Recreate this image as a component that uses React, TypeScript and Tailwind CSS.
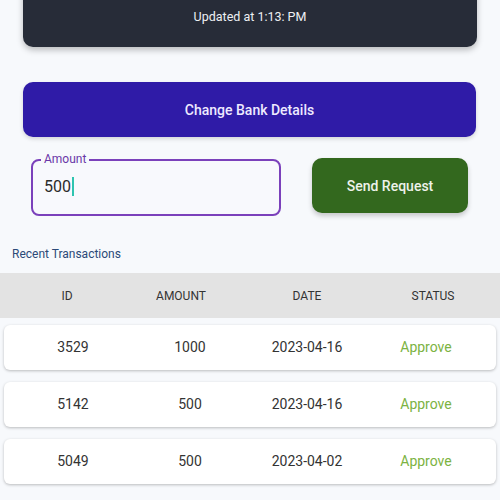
const transactions = [
  { id: '3529', amount: '1000', date: '2023-04-16', status: 'Approve' },
  { id: '5142', amount: '500', date: '2023-04-16', status: 'Approve' },
  { id: '5049', amount: '500', date: '2023-04-02', status: 'Approve' },
];

export default function App() {
  return (
    <div className="h-[500px] w-[500px] overflow-hidden bg-[#f7f9fc] font-['Roboto',sans-serif]">
      {/* balance card, scrolled partly out of view */}
      <div className="mx-[23px] -mt-[39px] flex flex-col items-center rounded-[10px] bg-[#272c38] pb-[22px] pt-[20px] shadow-[0_3px_6px_rgba(0,0,0,0.25)]">
        <p className="text-[14px] leading-[18px] text-white/90">Wallet Balance</p>
        <p className="mt-[10px] text-[12.5px] leading-[16px] text-[#eef0f4]">Updated at 1:13: PM</p>
      </div>

      <button
        type="button"
        className="mx-[23px] mt-[35px] flex h-[55px] w-[453px] items-center justify-center rounded-[10px] bg-[#2f1ba7] pt-[2px] text-[14px] font-medium text-[#eeeaff] shadow-[0_2px_4px_rgba(0,0,0,0.15)]"
      >
        Change Bank Details
      </button>

      <div className="mt-[21px] flex items-start">
        <div className="relative ml-[31px] mt-[1px] h-[57px] w-[250px] rounded-[8px] border-2 border-[#7b41bb] bg-[#f8f9fd]">
          <span className="absolute -top-[10px] left-[8px] bg-[#f7f9fc] px-[3px] text-[12px] leading-[16px] text-[#6a37a8]">
            Amount
          </span>
          <div className="flex h-full items-center pl-[11px] pb-[2px]">
            <span className="text-[16px] text-[#2b2b2b]">500</span>
            <span className="ml-[1px] h-[19px] w-[2px] bg-[#2ec4b0]" />
          </div>
        </div>
        <button
          type="button"
          className="ml-[31px] flex h-[55px] w-[156px] items-center justify-center rounded-[10px] bg-[#33681e] pt-[2px] text-[14px] font-medium text-[#eef2ea] shadow-[0_3px_5px_rgba(0,0,0,0.2)]"
        >
          Send Request
        </button>
      </div>

      <p className="ml-[12px] mt-[30px] text-[12px] leading-[16px] text-[#2c4a78]">Recent Transactions</p>

      <div className="mt-[11px] grid h-[45px] grid-cols-[134px_94px_158px_94px] items-center bg-[#e3e3e3] text-[12px] text-[#333]">
        <span className="text-center">ID</span>
        <span className="text-center">AMOUNT</span>
        <span className="text-center">DATE</span>
        <span className="text-center">STATUS</span>
      </div>

      <div className="mt-[7px] flex flex-col gap-[12px] px-[4px]">
        {transactions.map((t) => (
          <div
            key={t.id}
            className="grid h-[45px] grid-cols-[138px_96px_138px_100px] items-center rounded-[6px] bg-white text-[14px] text-[#333] shadow-[0_1px_3px_rgba(0,0,0,0.25)]"
          >
            <span className="text-center">{t.id}</span>
            <span className="text-center">{t.amount}</span>
            <span className="text-center">{t.date}</span>
            <span className="text-center text-[#7cb342]">{t.status}</span>
          </div>
        ))}
      </div>
    </div>
  );
}
